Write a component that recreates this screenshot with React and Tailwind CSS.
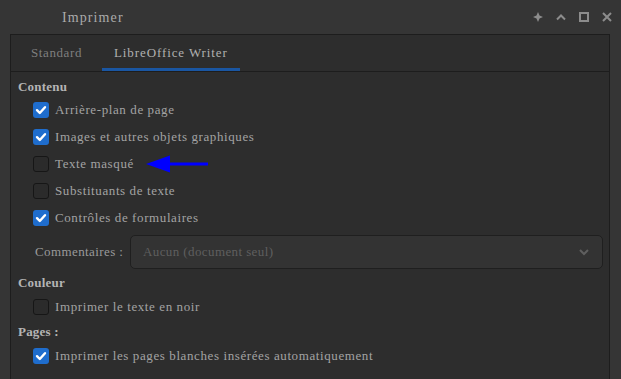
import React from 'react';

const font = { fontFamily: '"Liberation Serif", serif' };

const Check = ({ checked }) =>
  checked ? (
    <span className="w-4 h-4 rounded-[3px] bg-[#1f6dcd] flex items-center justify-center shrink-0">
      <svg width="12" height="12" viewBox="0 0 12 12">
        <path d="M2 6.2 L4.8 9 L10 3.2" fill="none" stroke="#ffffff" strokeWidth="2.4" strokeLinecap="round" strokeLinejoin="round" />
      </svg>
    </span>
  ) : (
    <span className="w-4 h-4 rounded-[3px] border border-[#161616] bg-[#2b2b2b] shrink-0" />
  );

const Row = ({ checked, label, h = 'h-[27px]' }) => (
  <div className={`${h} flex items-center pl-[22px]`}>
    <Check checked={checked} />
    <span className="ml-[6px] text-[13px] tracking-[0.6px] text-[#a3a3a3]">{label}</span>
  </div>
);

const Header = ({ text, h }) => (
  <div className={`${h} flex items-center pl-[7px] text-[13px] font-bold text-[#b4b4b4] tracking-[0.2px]`}>{text}</div>
);

export default function App() {
  return (
    <div className="w-[621px] h-[379px] bg-[#353535] flex flex-col overflow-hidden" style={font}>
      {/* barre de titre */}
      <div className="h-[34px] shrink-0 flex items-center">
        <span className="ml-[62px] text-[14px] tracking-[1.1px] text-[#ababab]">Imprimer</span>
        <div className="ml-auto mr-[8px] flex items-center gap-[11px]">
          <svg width="12" height="12" viewBox="0 0 12 12" fill="#8c8c8c">
            <path d="M6 1 L7.5 4.5 L11 6 L7.5 7.5 L6 11 L4.5 7.5 L1 6 L4.5 4.5 Z" />
          </svg>
          <svg width="12" height="12" viewBox="0 0 12 12">
            <path d="M2 8.5 L6 4.5 L10 8.5" fill="none" stroke="#8c8c8c" strokeWidth="2" />
          </svg>
          <svg width="12" height="12" viewBox="0 0 12 12">
            <rect x="2" y="2" width="8" height="8" fill="none" stroke="#8c8c8c" strokeWidth="2" />
          </svg>
          <svg width="12" height="12" viewBox="0 0 12 12">
            <path d="M2 2 L10 10 M10 2 L2 10" stroke="#8c8c8c" strokeWidth="2" />
          </svg>
        </div>
      </div>

      {/* panneau */}
      <div className="ml-[10px] w-[600px] flex-1 border-t border-l border-r border-[#1d1d1d] bg-[#2d2d2d] flex flex-col">
        <div className="h-[37px] shrink-0 flex items-end border-b border-[#1d1d1d]">
          <div className="h-full flex items-center pl-[20px] pr-[20px] text-[13px] tracking-[0.6px] text-[#7f7f7f]">Standard</div>
          <div className="h-full flex items-center px-[12px] text-[13px] tracking-[0.9px] text-[#b0b0b0] border-b-[3px] border-[#1a56a2] pt-[3px]">
            LibreOffice Writer
          </div>
        </div>

        <div className="relative flex flex-col pt-[6px]">
          <Header text="Contenu" h="h-[18px]" />
          <Row checked label="Arrière-plan de page" />
          <Row checked label="Images et autres objets graphiques" />
          <Row label="Texte masqué" />
          <Row label="Substituants de texte" />
          <Row checked label="Contrôles de formulaires" />

          {/* flèche d'annotation */}
          <svg className="absolute left-[135px] top-[82px]" width="63" height="20" viewBox="0 0 63 20">
            <path d="M20 8.5 H62 V11.5 H20 Z" fill="#0000ff" />
            <path d="M0 10 L24 1.5 L24 18.5 Z" fill="#0000ff" />
          </svg>

          <div className="mt-[4px] h-[34px] flex items-center pl-[24px] pr-[6px]">
            <span className="w-[95px] text-[13px] tracking-[0.4px] text-[#9a9a9a]">Commentaires :</span>
            <div className="flex-1 h-full rounded-[5px] border border-[#1f1f1f] bg-[#333333] flex items-center pl-[12px] pr-[12px]">
              <span className="text-[13px] tracking-[0.4px] text-[#5f5f5f]">Aucun (document seul)</span>
              <svg className="ml-auto" width="12" height="12" viewBox="0 0 12 12">
                <path d="M2 4 L6 8 L10 4" fill="none" stroke="#5f5f5f" strokeWidth="2" />
              </svg>
            </div>
          </div>

          <div className="mt-[2px]" />
          <Header text="Couleur" h="h-[24px]" />
          <Row label="Imprimer le texte en noir" h="h-[24px]" />
          <Header text="Pages :" h="h-[25px]" />
          <Row checked label="Imprimer les pages blanches insérées automatiquement" h="h-[24px]" />
        </div>
      </div>
    </div>
  );
}
